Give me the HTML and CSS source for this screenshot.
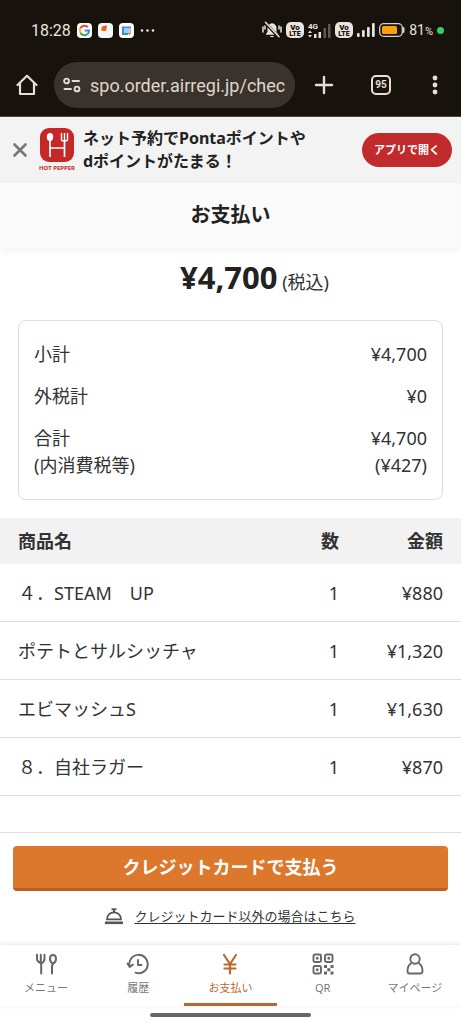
FILE: index.html
```html
<!DOCTYPE html>
<html lang="ja">
<head>
<meta charset="utf-8">
<meta name="viewport" content="width=device-width, initial-scale=1">
<title>お支払い</title>
<link rel="stylesheet" href="styles.css">
</head>
<body>
<div class="chrome">
  <div class="status">
    <div class="status-left">
      <span class="clock">18:28</span>
      <svg width="15" height="15" viewBox="0 0 15 15"><rect width="15" height="15" rx="4" fill="#fff"/><g fill="none" stroke-width="2"><path d="M11 4.2A4.6 4.6 0 0 0 3.4 5.3" stroke="#ea4335"/><path d="M3.4 5.3a4.6 4.6 0 0 0 0 4.4" stroke="#fbbc05"/><path d="M3.4 9.7a4.6 4.6 0 0 0 7.2 1.3" stroke="#34a853"/><path d="M10.6 11A4.6 4.6 0 0 0 12.1 7.6H7.6" stroke="#4285f4"/></g></svg>
      <svg width="15" height="15" viewBox="0 0 15 15"><rect width="15" height="15" rx="4" fill="#f5f6f8"/><circle cx="6" cy="5.5" r="2.6" fill="#f2640c"/><circle cx="3.7" cy="6.8" r="1" fill="#f6a11a"/><circle cx="7.8" cy="3.6" r="1" fill="#d93a1c"/></svg>
      <svg width="15" height="15" viewBox="0 0 15 15"><rect width="15" height="15" rx="4" fill="#fff"/><path d="M3 3.500h9v2H5v6.500H3z" fill="#4285f4"/><path d="M10.500 5.500H12v4.500h-1.500z" fill="#fbbc05"/><path d="M5 10h5l-1 2H5z" fill="#34a853"/><path d="M10 10h2l-2 2z" fill="#ea4335"/><rect x="5" y="5.500" width="5.500" height="4.500" fill="#a9c9f6"/></svg>
      <svg width="15" height="15" viewBox="0 0 15 15" fill="#e8e4df"><circle cx="2" cy="7.500" r="1.300"/><circle cx="7.500" cy="7.500" r="1.300"/><circle cx="13" cy="7.500" r="1.300"/></svg>
    </div>
    <div class="status-right">
      <svg width="20" height="18" viewBox="0 0 20 18"><path d="M10 2.200c-3 .4-4.500 2.400-4.500 5V11L4 13v.8h12V13l-1.500-2V7.200c0-2.600-1.500-4.600-4.500-5zM8 15h4c-.4 1.600-3.600 1.600-4 0z" fill="#e8e4df"/><path d="M3 1.500l14 15" stroke="#17120c" stroke-width="3"/><path d="M3.500 1.200l13.500 14.600M1 6v5M3 5v3M19 6v5M17 5v3" stroke="#e8e4df" stroke-width="1.500" stroke-linecap="round"/></svg>
      <svg class="volte" width="18" height="16" viewBox="0 0 18 16"><rect width="18" height="16" rx="5" fill="#e8e4df"/><text x="9" y="7.500" text-anchor="middle">Vo</text><text x="9" y="14" text-anchor="middle">LTE</text></svg>
      <svg class="mobile" width="23" height="17" viewBox="0 0 23 17"><text x="0" y="7">4G</text><g fill="#e8e4df"><path d="M2 8.500l2 2.500H0zM2 15.500l2-2.500H0zM6 12h2.500v4H6zM10.500 10H13v6h-2.500z"/></g><path d="M15.500 6H18v10h-2.500zM20 2h2.500v14H20z" fill="#5c5853"/></svg>
      <svg class="volte" width="18" height="16" viewBox="0 0 18 16"><rect width="18" height="16" rx="5" fill="#e8e4df"/><text x="9" y="7.500" text-anchor="middle">Vo</text><text x="9" y="14" text-anchor="middle">LTE</text></svg>
      <svg width="18" height="16" viewBox="0 0 18 16" fill="#e8e4df"><rect y="11" width="2.700" height="4" rx="1"/><rect x="5" y="8" width="2.700" height="7" rx="1"/><rect x="10" y="5" width="2.700" height="10" rx="1"/><rect x="15" y="1" width="2.700" height="14" rx="1"/></svg>
      <svg width="26" height="14" viewBox="0 0 26 14"><rect x=".7" y=".7" width="22.600" height="12.600" rx="4" fill="none" stroke="#d6d1ca" stroke-width="1.300"/><rect x="3" y="3" width="15" height="8" rx="1.500" fill="#ff9f0a"/><path d="M24.500 5v4" stroke="#d6d1ca" stroke-width="2" stroke-linecap="round"/></svg>
      <span class="battery">81<small>%</small></span>
      <span class="dot"></span>
    </div>
  </div>
  <div class="toolbar">
    <button class="tool" aria-label="ホーム"><svg width="22" height="22" viewBox="0 0 22 22" fill="none" stroke="#e8ded5" stroke-width="2.200" stroke-linejoin="round" stroke-linecap="round"><path d="M1.500 11L11 1.800 20.500 11M4 9v11h14V9"/></svg></button>
    <div class="address">
      <svg width="18" height="16" viewBox="0 0 18 16" fill="none" stroke="#e8ded5" stroke-width="1.900" stroke-linecap="round"><circle cx="3.500" cy="4" r="2.400"/><path d="M9.500 4H16M1.500 12H8"/><circle cx="14" cy="12" r="2.400"/></svg>
      <input class="url" type="text" aria-label="アドレス" value="spo.order.airregi.jp/chec" readonly>
    </div>
    <button class="tool" aria-label="新しいタブ"><svg width="20" height="20" viewBox="0 0 20 20" stroke="#e8ded5" stroke-width="2.400" stroke-linecap="round"><path d="M10 2v16M2 10h16"/></svg></button>
    <button class="tool tabs" aria-label="タブ 95"><span>95</span></button>
    <button class="tool" aria-label="その他"><svg width="6" height="20" viewBox="0 0 6 20" fill="#e8ded5"><circle cx="3" cy="3" r="2.400"/><circle cx="3" cy="10" r="2.400"/><circle cx="3" cy="17" r="2.400"/></svg></button>
  </div>
</div>

<aside class="banner">
  <button class="close" aria-label="閉じる"><svg width="14" height="14" viewBox="0 0 14 14" stroke="#777" stroke-width="2.600" stroke-linecap="round"><path d="M1.500 1.500l11 11M12.500 1.500l-11 11"/></svg></button>
  <div class="brand">
    <svg width="34" height="34" viewBox="0 0 34 34"><rect width="34" height="34" rx="9" fill="#c62828"/><ellipse cx="10" cy="9" rx="3.200" ry="4" fill="#fff"/><path d="M10 12v17M24.500 12v17M10 20h14.500" stroke="#fff" stroke-width="1.700"/><path d="M21.500 5v6.500c0 2 6 2 6 0V5M24.500 5v8" fill="none" stroke="#fff" stroke-width="1.400"/></svg>
    <span>HOT PEPPER</span>
  </div>
  <p class="promo">ネット予約でPontaポイントや<br>dポイントがたまる！</p>
  <a class="open" href="#app">アプリで開く</a>
</aside>

<header class="title"><h1>お支払い</h1></header>

<main>
  <p class="total"><strong>¥4,700</strong> (税込)</p>
  <dl class="summary">
    <div><dt>小計</dt><dd>¥4,700</dd></div>
    <div><dt>外税計</dt><dd>¥0</dd></div>
    <div><dt>合計<br>(内消費税等)</dt><dd>¥4,700<br>(¥427)</dd></div>
  </dl>
  <table class="items">
    <thead><tr><th>商品名</th><th>数</th><th>金額</th></tr></thead>
    <tbody>
      <tr><td>４．STEAM　UP</td><td>1</td><td>¥880</td></tr>
      <tr><td>ポテトとサルシッチャ</td><td>1</td><td>¥1,320</td></tr>
      <tr><td>エビマッシュS</td><td>1</td><td>¥1,630</td></tr>
      <tr><td>８．自社ラガー</td><td>1</td><td>¥870</td></tr>
    </tbody>
  </table>
</main>

<section class="pay">
  <button class="card-pay">クレジットカードで支払う</button>
  <div class="other">
    <svg width="18" height="17" viewBox="0 0 18 17" fill="none" stroke="#555"><path d="M6.500 1.200h5" stroke-width="1.800"/><path d="M9 1.500v3" stroke-width="2"/><path d="M2 11.300c0-9.300 14-9.300 14 0z" stroke-width="1.800"/><path d="M0 14.800h18" stroke-width="2.600"/></svg>
    <a href="#other">クレジットカード以外の場合はこちら</a>
  </div>
</section>

<nav class="nav">
  <a href="#menu"><svg width="22" height="22" viewBox="0 0 22 22" fill="none" stroke="#666" stroke-width="2" stroke-linecap="round" stroke-linejoin="round"><path d="M2 1.800V6c0 2.500 1.500 3 4 4.500M9.500 1.800V6c0 2.500-1 3.200-3.300 4.800V20.500M5.800 1.800v8M18 10.800l-1 2v7.700"/><path d="M18 10.800c-2.300-1.300-3-2.800-3-5 0-5.200 6-5.200 6 0 0 2.200-.7 3.700-3 5z"/></svg><span>メニュー</span></a>
  <a href="#history"><svg width="24" height="22" viewBox="0 0 24 22" fill="none" stroke="#666" stroke-width="1.900" stroke-linecap="round" stroke-linejoin="round"><path d="M3.700 13.500A9.200 9.200 0 1 1 9.500 19.700M1.500 10.500l2.200 3.500 3.300-2.500M12 7v5h3.500"/></svg><span>履歴</span></a>
  <a class="active" href="#pay" aria-current="page"><svg width="22" height="22" viewBox="0 0 22 22" fill="none" stroke="#b9682f" stroke-width="2.200" stroke-linecap="round"><path d="M5 2l6 9 6-9M11 11v9.500M5.500 11.500h11M5.500 15.500h11"/></svg><span>お支払い</span></a>
  <a href="#qr"><svg width="22" height="22" viewBox="0 0 22 22" fill="none" stroke="#666" stroke-width="1.900"><rect x="1.500" y="1.500" width="7.500" height="7.500" rx="1.500"/><rect x="13" y="1.500" width="7.500" height="7.500" rx="1.500"/><rect x="1.500" y="13" width="7.500" height="7.500" rx="1.500"/><path d="M4 4h2.500v2.500H4zM15.500 4H18v2.500h-2.500zM4 15.500h2.500V18H4zM12 12h3v3h-3zM18.500 12h3v3h-3zM15.300 15.200h3v3h-3zM12 18.500h3v3h-3zM18.500 18.500h3v3h-3z" fill="#666" stroke="none"/></svg><span>QR</span></a>
  <a href="#mypage"><svg width="22" height="22" viewBox="0 0 22 22" fill="none" stroke="#666" stroke-width="1.900" stroke-linejoin="round"><circle cx="11" cy="6" r="4.700"/><path d="M7.500 10c-3 1.700-4 4.500-4 8 0 1.800.5 2.500 2 2.500h11c1.500 0 2-.7 2-2.500 0-3.500-1-6.300-4-8"/></svg><span>マイページ</span></a>
</nav>
<div class="gesture"><span></span></div>
</body>
</html>
```
FILE: styles.css
```css
* {
  box-sizing: border-box;
}

body {
  margin: 0;
  min-height: 100vh;
  display: flex;
  flex-direction: column;
  background: #fff;
  color: #333;
  font-family: "Noto Sans", "Noto Sans CJK JP", sans-serif;
  font-size: 18px;
}

svg {
  display: block;
  flex: none;
}

button {
  font: inherit;
  border: 0;
  padding: 0;
  background: none;
}

h1, p, dl, dd {
  margin: 0;
}

/* Device status bar and browser toolbar */
.chrome {
  background: #17120c;
  border-bottom: 1px solid #4d4342;
  color: #e8e4df;
  font-family: Roboto, sans-serif;
}

.status {
  height: 60px;
  display: flex;
  align-items: center;
  justify-content: space-between;
  padding: 0 17px 0 31px;
}

.status-left,
.status-right {
  display: flex;
  align-items: center;
}

.status-left {
  gap: 6px;
}

.status-right {
  gap: 4px;
}

.clock {
  font-size: 16px;
}

.battery {
  font-size: 14px;
}

.battery small {
  font-size: 11px;
}

.dot {
  width: 7px;
  height: 7px;
  border-radius: 50%;
  background: #32d166;
}

.volte text {
  font: 900 8px Roboto, sans-serif;
  fill: #17120c;
}

.volte text + text {
  font-size: 7px;
}

.mobile text {
  font: 700 8px Roboto, sans-serif;
  fill: #e8e4df;
}

.toolbar {
  display: flex;
  align-items: center;
  padding: 2px 10px 8px 11px;
}

.tool {
  width: 32px;
  height: 46px;
  display: grid;
  place-items: center;
}

.address {
  flex: 1;
  min-width: 0;
  height: 46px;
  margin: 0 13px 0 11px;
  padding: 0 8px 0 9px;
  border-radius: 23px;
  background: #39332d;
  display: flex;
  align-items: center;
  gap: 9px;
}

.url {
  flex: 1;
  min-width: 0;
  padding: 0;
  border: 0;
  background: none;
  color: #e0d5cb;
  font: 18px Roboto, sans-serif;
}

.tabs {
  margin: 0 22px 0 25px;
}

.tabs span {
  width: 20px;
  height: 20px;
  border: 2px solid #e8ded5;
  border-radius: 5px;
  color: #e8ded5;
  font: 700 10px/16px Roboto, sans-serif;
}

/* App banner */
.banner {
  display: flex;
  align-items: center;
  padding: 10px 9px 10px 12px;
  background: #f3f3f3;
}

.close {
  width: 16px;
  height: 16px;
  display: grid;
  place-items: center;
}

.brand {
  width: 36px;
  margin: 0 8px 0 11px;
  display: flex;
  flex-direction: column;
  align-items: center;
  gap: 2px;
}

.brand span {
  color: #c62828;
  font: 700 6px/8px "Noto Sans", sans-serif;
  white-space: nowrap;
}

.promo {
  flex: 1;
  color: #222;
  font-size: 16px;
  font-weight: 700;
  line-height: 23px;
}

.open {
  width: 90px;
  border-radius: 17px;
  background: #c22b2b;
  color: #fff;
  font-size: 11px;
  font-weight: 700;
  line-height: 34px;
  text-align: center;
  text-decoration: none;
}

.title {
  padding: 16px 0;
  background: #fafafa;
  box-shadow: 0 4px 8px rgba(0, 0, 0, .05);
  text-align: center;
}

.title h1 {
  color: #222;
  font-size: 20px;
  line-height: 32px;
}

/* Amounts */
main {
  flex: 1;
}

.total {
  padding: 8px 0 16px 48px;
  line-height: 44px;
  text-align: center;
}

.total strong {
  color: #222;
  font-size: 31px;
}

.summary {
  margin: 0 18px 18px;
  padding: 20px 15px;
  border: 1px solid #ddd;
  border-radius: 8px;
  display: grid;
  gap: 15px;
  line-height: 27px;
}

.summary div {
  display: flex;
  justify-content: space-between;
}

.summary dd {
  text-align: right;
}

.items {
  width: 100%;
  border-collapse: collapse;
  line-height: 28px;
}

.items th {
  padding: 9px 0;
  background: #f2f2f2;
}

.items td {
  padding: 15px 0 14px;
  border-bottom: 1px solid #ddd;
}

.items th:first-child,
.items td:first-child {
  padding-left: 18px;
  text-align: left;
}

.items th:nth-child(2),
.items td:nth-child(2) {
  width: 54px;
  text-align: right;
}

.items th:last-child,
.items td:last-child {
  width: 122px;
  padding-right: 18px;
  text-align: right;
}

/* Payment actions */
.pay {
  padding: 13px 13px 16px;
  border-top: 1px solid #ddd;
}

.card-pay {
  width: 100%;
  border-bottom: 3px solid #b9601f;
  border-radius: 4px;
  background: #dc772c;
  color: #fff;
  font-weight: 700;
  line-height: 42px;
}

.other {
  margin-top: 13px;
  display: flex;
  align-items: center;
  justify-content: center;
  gap: 11px;
  font-size: 13px;
  line-height: 25px;
}

.other a {
  color: #333;
  text-underline-offset: 2px;
}

/* Bottom navigation */
.nav {
  display: grid;
  grid-template-columns: repeat(5, 1fr);
  box-shadow: 0 -1px 5px rgba(0, 0, 0, .1);
}

.nav a {
  padding: 8px 0 7px;
  display: flex;
  flex-direction: column;
  align-items: center;
  gap: 5px;
  border-bottom: 3px solid transparent;
  color: #777;
  font-size: 11px;
  line-height: 16px;
  text-decoration: none;
}

.nav .active {
  border-color: #b9682f;
  color: #b9682f;
}

.gesture {
  padding: 7px 0;
}

.gesture span {
  display: block;
  width: 35%;
  height: 4px;
  margin: 0 auto;
  border-radius: 2px;
  background: #666;
}
```
